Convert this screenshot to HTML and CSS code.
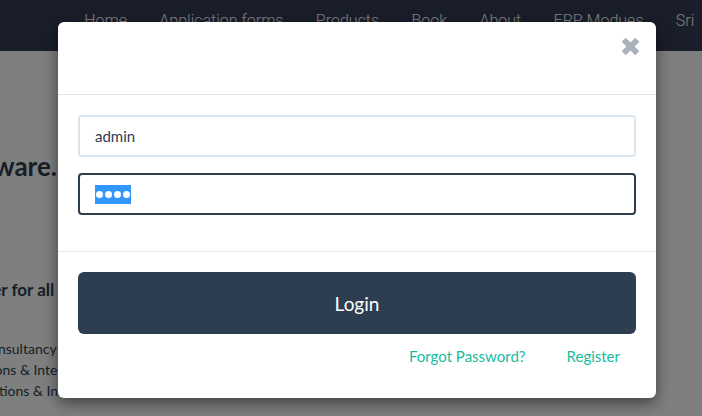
FILE: index.html
```html
<!DOCTYPE html>
<html lang="en">
<head>
<meta charset="utf-8">
<title>Login</title>
<link rel="stylesheet" href="styles.css">
</head>
<body>
<div class="page">
  <nav class="navbar">
    <ul class="nav-links">
      <li>Home</li>
      <li>Application forms</li>
      <li>Products</li>
      <li>Book</li>
      <li>About</li>
      <li>ERP Modues</li>
      <li>Sri</li>
    </ul>
  </nav>
  <main class="content">
    <div class="row hero-title"><h1>Best ERP Software.</h1></div>
    <div class="row hero-sub"><h3>One partner for all your needs</h3></div>
    <div class="row service s1"><span>Software Consultancy services</span></div>
    <div class="row service s2"><span>Applications &amp; Integrations</span></div>
    <div class="row service s3"><span>Solutions &amp; Integrations</span></div>
  </main>
</div>

<div class="backdrop">
  <div class="modal">
    <div class="modal-header">
      <button class="close" aria-label="Close">
        <svg viewBox="0 0 20 20" width="21" height="21"><path d="M2.5 5.5 L5.5 2.5 L10 7 L14.5 2.5 L17.5 5.5 L13 10 L17.5 14.5 L14.5 17.5 L10 13 L5.5 17.5 L2.5 14.5 L7 10 Z" fill="#a9b1bc" stroke="#a9b1bc" stroke-width="1.2" stroke-linejoin="round"/></svg>
      </button>
    </div>
    <div class="modal-body">
      <div class="field">admin</div>
      <div class="field field-focus"><span class="sel"><i></i><i></i><i></i><i></i></span></div>
    </div>
    <div class="modal-footer">
      <button class="btn-login">Login</button>
      <div class="links">
        <a href="#">Forgot Password?</a>
        <a href="#">Register</a>
      </div>
    </div>
  </div>
</div>
</body>
</html>
```
FILE: styles.css
```css
* { box-sizing: border-box; }
html, body { margin: 0; padding: 0; }
body {
  width: 702px;
  height: 416px;
  overflow: hidden;
  font-family: Lato, "Noto Sans", sans-serif;
  background: #ffffff;
  position: relative;
}
.page { width: 702px; }
.navbar {
  height: 51px;
  background: #343d57;
}
.nav-links {
  list-style: none;
  margin: 0;
  padding: 11px 0 0 68px;
  display: flex;
  white-space: nowrap;
  font-family: Roboto, "Liberation Sans", sans-serif;
  font-weight: 300;
  font-size: 16px;
  line-height: 19px;
  color: #ffffff;
}
.nav-links li { padding: 0 16.2px; }

.content {
  width: 57px;
  color: #2c3e50;
}
.row {
  display: flex;
  justify-content: flex-end;
  white-space: nowrap;
}
.row h1, .row h3 { margin: 0; }
.hero-title { padding-top: 100px; }
.hero-title h1 {
  font-size: 26px;
  font-weight: 700;
  line-height: 30px;
}
.hero-sub { padding-top: 99px; }
.hero-sub h3 {
  font-size: 17px;
  font-weight: 700;
  line-height: 20px;
  margin-right: -84px;
}
.service {
  font-size: 14px;
  line-height: 21px;
}
.s1 { padding-top: 38px; }
.s1 span { margin-right: -52px; }
.s2 span { margin-right: -50px; }
.s3 span { margin-right: -63px; }

.backdrop {
  position: absolute;
  inset: 0;
  background: rgba(0, 0, 0, 0.5);
  padding: 22px 0 0 58px;
}
.modal {
  width: 598px;
  background: #ffffff;
  border-radius: 6px;
  box-shadow: 0 5px 15px rgba(0, 0, 0, 0.5);
}
.modal-header {
  height: 73px;
  border-bottom: 1px solid #e5e5e5;
  display: flex;
  justify-content: flex-end;
  align-items: flex-start;
  padding: 14px 15px 0 0;
}
.close {
  border: 0;
  background: none;
  padding: 0;
  width: 21px;
  height: 21px;
  cursor: pointer;
}
.close svg { display: block; }
.modal-body {
  padding: 20px 20px 36px;
  border-bottom: 1px solid #e5e5e5;
  display: flex;
  flex-direction: column;
  gap: 16px;
}
.field {
  height: 42px;
  border: 2px solid #dce4ec;
  border-radius: 4px;
  padding: 0 15px;
  display: flex;
  align-items: center;
  font-size: 15px;
  color: #2c3e50;
}
.field-focus { border-color: #2c3e50; }
.sel {
  display: inline-flex;
  align-items: center;
  gap: 2px;
  height: 19px;
  padding: 0 1px;
  background: #3297fd;
}
.sel i {
  display: block;
  width: 7px;
  height: 7px;
  border-radius: 50%;
  background: #ffffff;
}
.modal-footer {
  padding: 20px 20px 32px;
}
.btn-login {
  display: block;
  width: 100%;
  height: 62px;
  border: 0;
  border-radius: 6px;
  background: #2c3e50;
  color: #ffffff;
  font-family: Lato, "Noto Sans", sans-serif;
  font-size: 19px;
}
.links {
  margin-top: 12px;
  display: flex;
  justify-content: flex-end;
  gap: 41px;
  padding-right: 16px;
  line-height: 20px;
}
.links a {
  font-size: 15px;
  color: #18bc9c;
  text-decoration: none;
}
```
